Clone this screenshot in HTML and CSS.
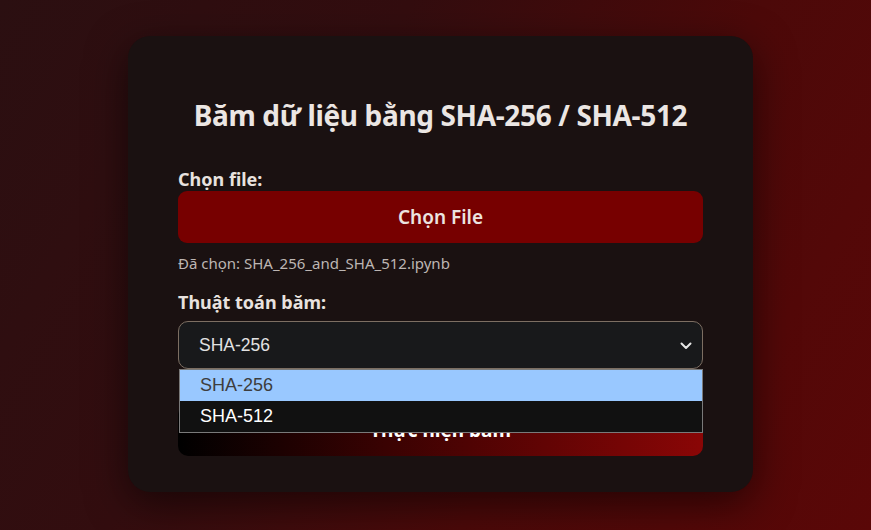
FILE: index.html
```html
<!DOCTYPE html>
<html lang="vi">
<head>
<meta charset="utf-8">
<title>Băm dữ liệu</title>
<link rel="stylesheet" href="styles.css">
</head>
<body>
<div class="page">
  <div class="card">
    <h2 class="title">Băm dữ liệu bằng SHA-256 / SHA-512</h2>
    <div class="label label-file">Chọn file:</div>
    <button class="btn-file">Chọn File</button>
    <div class="chosen">Đã chọn: SHA_256_and_SHA_512.ipynb</div>
    <div class="label label-algo">Thuật toán băm:</div>
    <div class="select-wrap">
      <div class="select">
        <span class="select-value">SHA-256</span>
        <svg class="chevron" width="12" height="8" viewBox="0 0 12 8"><path d="M1.5 1.5 L6 6 L10.5 1.5" fill="none" stroke="#e6e6e6" stroke-width="2" stroke-linecap="round" stroke-linejoin="round"/></svg>
      </div>
      <div class="dropdown">
        <div class="option option-active">SHA-256</div>
        <div class="option">SHA-512</div>
      </div>
    </div>
    <button class="btn-run">Thực hiện băm</button>
  </div>
</div>
</body>
</html>
```
FILE: styles.css
```css
* { box-sizing: border-box; }
html, body { margin: 0; padding: 0; }
body {
  height: 530px;
  overflow: hidden;
  background: linear-gradient(120deg, #2b0f11 0%, #330d0f 35%, #4c0909 65%, #5a0707 100%);
  font-family: "Noto Sans", "Open Sans", sans-serif;
}
.page {
  height: 530px;
  display: flex;
  align-items: flex-start;
  justify-content: center;
  padding: 36px 0 0 10px;
}
.card {
  width: 625px;
  height: 456px;
  background: #1a1111;
  border-radius: 22px;
  padding: 62px 50px 36px;
  box-shadow: 0 12px 40px rgba(0, 0, 0, 0.55);
  display: flex;
  flex-direction: column;
}
.title {
  margin: 0 0 36px;
  font-size: 28px;
  line-height: 34px;
  font-weight: 700;
  color: #ebe6e3;
  text-align: center;
  letter-spacing: -0.35px;
}
.label {
  font-size: 18px;
  line-height: 22px;
  font-weight: 700;
  color: #e8e2df;
}
.label-file { margin-bottom: 1px; }
.label-algo { margin-top: 18px; margin-bottom: 8px; }
.btn-file {
  height: 52px;
  width: 100%;
  border: none;
  border-radius: 9px;
  background: #770000;
  color: #ece4e0;
  font-family: inherit;
  font-size: 19px;
  font-weight: 600;
  padding: 0;
}
.chosen {
  margin-top: 10px;
  font-size: 15px;
  line-height: 20px;
  color: #bdb6b3;
}
.select-wrap {
  position: relative;
}
.select {
  height: 48px;
  border: 1px solid #7c6e62;
  border-radius: 10px;
  background: #18191b;
  display: flex;
  align-items: center;
  justify-content: space-between;
  padding: 0 10px 0 20px;
  font-family: "Liberation Sans", Arial, sans-serif;
  font-size: 17.5px;
  color: #e2e2e2;
}
.chevron { display: block; margin-top: 1px; }
.dropdown {
  position: absolute;
  left: 1px;
  right: 0;
  top: 48px;
  border: 1px solid #7a7a7a;
  background: #111111;
  font-family: "Liberation Sans", Arial, sans-serif;
  font-size: 18px;
  z-index: 5;
}
.option {
  height: 31px;
  line-height: 31px;
  padding-left: 20px;
  color: #ffffff;
}
.option-active {
  background: #99c8ff;
  color: #3d3d3d;
}
.btn-run {
  margin-top: 35px;
  height: 52px;
  width: 100%;
  border: none;
  border-radius: 10px;
  background: linear-gradient(90deg, #000000 0%, #3a0202 40%, #8a0606 100%);
  color: #ffffff;
  font-family: inherit;
  font-size: 19px;
  font-weight: 700;
  padding: 0;
}
```
